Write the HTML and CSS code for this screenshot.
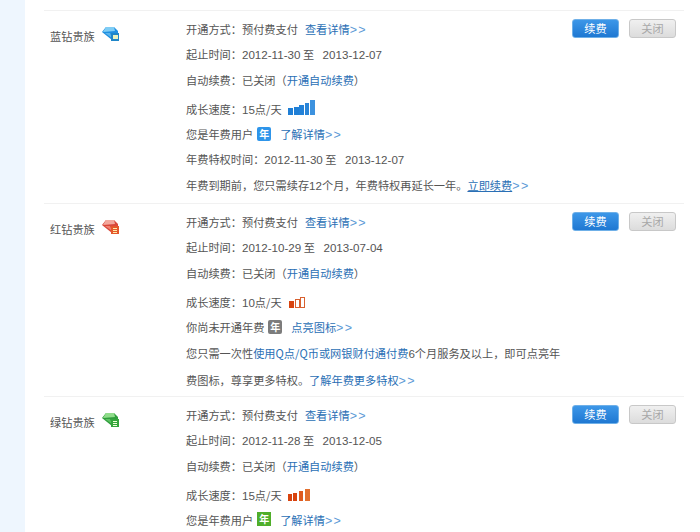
FILE: index.html
```html
<!DOCTYPE html>
<html lang="zh-CN">
<head>
<meta charset="utf-8">
<title>贵族服务</title>
<link rel="stylesheet" href="styles.css">
</head>
<body>
<div class="page">
  <aside class="side"></aside>
  <main class="main">
    <section class="row">
      <div class="name"><span>蓝钻贵族</span>
        <svg class="gem" viewBox="0 0 17 14"><polygon points="0,5 4,0 12,0 16,4 16,13 10,13" fill="#1f8fe0"/><polygon points="4,0 12,0 13,4 1,5" fill="#7fcdf5"/><polygon points="3,6 8,6 10,11" fill="#5ab4ee"/><rect x="9" y="6" width="8" height="8" fill="#1f86c8"/><rect x="11" y="8" width="5" height="4" fill="#e9f3c0"/></svg>
      </div>
      <div class="info">
        <p class="line">开通方式：预付费支付<a class="link gap" href="#">查看详情<i>&gt;&gt;</i></a></p>
        <p class="line">起止时间：<span class="num">2012-11-30</span> 至 <span class="num sp">2013-12-07</span></p>
        <p class="line">自动续费：已关闭（<a class="link" href="#">开通自动续费</a>）</p>
        <p class="line grow">成长速度：<span class="num">15</span>点/天
          <svg class="bars b5" viewBox="0 0 27 15"><rect x="0" y="8" width="5" height="7" fill="#1f7fd6"/><rect x="6" y="7" width="5" height="8" fill="#1f7fd6"/><rect x="11" y="5" width="5" height="10" fill="#2281d8"/><rect x="17" y="3" width="4" height="12" fill="#2a85d8"/><rect x="22" y="0" width="5" height="15" fill="#3c92df"/></svg>
        </p>
        <p class="line">您是年费用户<b class="year blue">年</b><a class="link gap2" href="#">了解详情<i>&gt;&gt;</i></a></p>
        <p class="line">年费特权时间：<span class="num">2012-11-30</span> 至 <span class="num sp">2013-12-07</span></p>
        <p class="line">年费到期前，您只需续存<span class="num">12</span>个月，年费特权再延长一年。<a class="link" href="#"><u>立即续费</u><i>&gt;&gt;</i></a></p>
      </div>
      <div class="actions"><button class="btn on">续费</button><button class="btn off">关闭</button></div>
    </section>
    <section class="row">
      <div class="name"><span>红钻贵族</span>
        <svg class="gem" viewBox="0 0 17 14"><polygon points="0,5 4,0 12,0 16,4 16,13 10,13" fill="#d9473a"/><polygon points="4,0 12,0 13,4 1,5" fill="#f2a79c"/><polygon points="3,6 8,6 10,11" fill="#ee8072"/><rect x="9" y="6" width="8" height="8" fill="#e4572a"/><rect x="11" y="8" width="4" height="1" fill="#ffe9a8"/><rect x="11" y="10" width="4" height="1" fill="#ffe9a8"/><rect x="11" y="12" width="4" height="1" fill="#ffe9a8"/></svg>
      </div>
      <div class="info">
        <p class="line">开通方式：预付费支付<a class="link gap" href="#">查看详情<i>&gt;&gt;</i></a></p>
        <p class="line">起止时间：<span class="num">2012-10-29</span> 至 <span class="num sp">2013-07-04</span></p>
        <p class="line">自动续费：已关闭（<a class="link" href="#">开通自动续费</a>）</p>
        <p class="line grow">成长速度：<span class="num">10</span>点/天
          <svg class="bars b3" viewBox="0 0 16 11"><rect x="0" y="4" width="5" height="7" fill="#d8430f"/><rect x="6.5" y="2.5" width="4" height="8" fill="#fff" stroke="#d8602f"/><rect x="11.5" y="0.5" width="4" height="10" fill="#fff" stroke="#d8602f"/></svg>
        </p>
        <p class="line">你尚未开通年费<b class="year grey">年</b><a class="link gap3" href="#">点亮图标<i>&gt;&gt;</i></a></p>
        <p class="line wrap">您只需一次性<a class="link" href="#">使用Q点/Q币或网银财付通付费</a><span class="num">6</span>个月服务及以上，即可点亮年费图标，尊享更多特权。<a class="link" href="#">了解年费更多特权<i>&gt;&gt;</i></a></p>
      </div>
      <div class="actions"><button class="btn on">续费</button><button class="btn off">关闭</button></div>
    </section>
    <section class="row">
      <div class="name"><span>绿钻贵族</span>
        <svg class="gem" viewBox="0 0 17 14"><polygon points="0,5 4,0 12,0 16,4 16,13 10,13" fill="#2f9e3c"/><polygon points="4,0 12,0 13,4 1,5" fill="#8fdc8a"/><polygon points="3,6 8,6 10,11" fill="#5cc062"/><rect x="9" y="6" width="8" height="8" fill="#35a53d"/><rect x="11" y="8" width="4" height="1" fill="#f0ffd8"/><rect x="11" y="10" width="4" height="1" fill="#f0ffd8"/><rect x="11" y="12" width="4" height="1" fill="#f0ffd8"/></svg>
      </div>
      <div class="info">
        <p class="line">开通方式：预付费支付<a class="link gap" href="#">查看详情<i>&gt;&gt;</i></a></p>
        <p class="line">起止时间：<span class="num">2012-11-28</span> 至 <span class="num sp">2013-12-05</span></p>
        <p class="line">自动续费：已关闭（<a class="link" href="#">开通自动续费</a>）</p>
        <p class="line grow">成长速度：<span class="num">15</span>点/天
          <svg class="bars b4" viewBox="0 0 22 12"><rect x="0" y="5" width="4" height="7" fill="#d8430f"/><rect x="5" y="4" width="4" height="8" fill="#d8430f"/><rect x="11" y="2" width="4" height="10" fill="#de5a1f"/><rect x="17" y="0" width="5" height="12" fill="#e2702f"/></svg>
        </p>
        <p class="line">您是年费用户<b class="year green">年</b><a class="link gap2" href="#">了解详情<i>&gt;&gt;</i></a></p>
      </div>
      <div class="actions"><button class="btn on">续费</button><button class="btn off">关闭</button></div>
    </section>
  </main>
</div>
</body>
</html>
```
FILE: styles.css
```css
html, body {
  margin: 0;
  padding: 0;
  height: 532px;
  overflow: hidden;
  background: #fff;
}
.page {
  display: flex;
  height: 532px;
  overflow: hidden;
  font-family: "Noto Sans CJK SC", "Liberation Sans", sans-serif;
  font-size: 11.2px;
  color: #555;
}
.side {
  width: 25px;
  flex: none;
  background: #eef6fe;
}
.main {
  width: 640px;
  margin-left: 19px;
  padding-top: 10px;
}
.row {
  display: grid;
  grid-template-columns: 142px 386px 112px;
  border-top: 1px solid #f1f1f1;
  padding: 6px 0 4.7px;
}
.name {
  display: flex;
  align-items: flex-start;
  padding: 11px 0 0 6px;
  line-height: 17px;
}
.gem {
  width: 17px;
  height: 14px;
  margin: 0 0 0 7px;
  position: relative;
  top: -1px;
}
.info { min-width: 0; }
.line {
  margin: 0;
  height: 25.4px;
  line-height: 25.4px;
  white-space: nowrap;
}
.wrap {
  white-space: normal;
  width: 378px;
  height: 50.8px;
  line-height: 26.5px;
}
.grow { margin-top: 3.5px; }
.num {
  font-family: "Liberation Sans", sans-serif;
  font-size: 11.6px;
  line-height: 0;
}
.sp { margin-left: 6px; }
.link { color: #2a6fb5; text-decoration: none; }
.link i {
  font-style: normal;
  color: #5c9ad6;
  font-family: "Liberation Sans", sans-serif;
  font-size: 12.5px;
  letter-spacing: 1.4px;
  line-height: 0;
}
.gap { margin-left: 7px; }
.gap2 { margin-left: 9px; }
.gap3 { margin-left: 9px; }
.bars { display: inline-block; vertical-align: -1px; margin-left: 4px; }
.b5 { width: 27px; height: 15px; }
.b3 { width: 16px; height: 11px; margin-left: 5px; }
.b4 { width: 22px; height: 12px; }
.year {
  display: inline-block;
  width: 14px;
  height: 14px;
  line-height: 14px;
  margin-left: 4px;
  border-radius: 2px;
  text-align: center;
  font-size: 10px;
  font-weight: 700;
  color: #fff;
  vertical-align: 1px;
}
.blue { background: #2e95ea; }
.grey { background: #7c7c7c; }
.green { background: #4fae2a; border-radius: 0; vertical-align: 2px; }
.actions {
  display: flex;
  align-items: flex-start;
  gap: 10px;
  padding-top: 2px;
}
.btn {
  width: 47px;
  height: 19px;
  padding: 0;
  border-radius: 3px;
  font: 11.2px/17px "Noto Sans CJK SC", sans-serif;
}
.on {
  color: #fff;
  background: linear-gradient(#3d97e8, #1f78d2);
  border: 1px solid #6fb0e8;
}
.off {
  color: #a8a8a8;
  background: linear-gradient(#f0f0f0, #dcdcdc);
  border: 1px solid #c8c8c8;
}
```
